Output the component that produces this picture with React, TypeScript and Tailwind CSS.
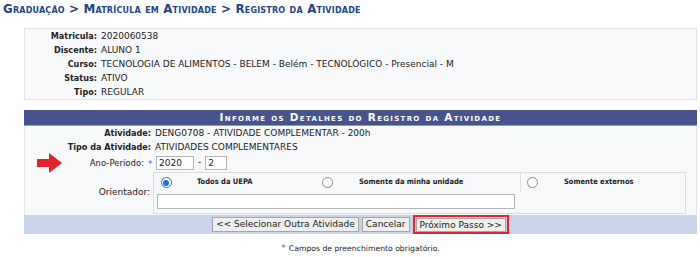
import React from "react";

function Radio({ checked }: { checked?: boolean }) {
  return checked ? (
    <span className="inline-flex h-[11px] w-[11px] items-center justify-center rounded-full border-[1.5px] border-[#1a73e8] bg-white">
      <span className="h-[6px] w-[6px] rounded-full bg-[#1a73e8]" />
    </span>
  ) : (
    <span className="inline-block h-[11px] w-[11px] rounded-full border border-[#8a8a8a] bg-white" />
  );
}

function Star() {
  return <span className="text-[9px] leading-none text-[#3f6cc0]">*</span>;
}

function Row({ label, value, w }: { label: string; value: string; w: string }) {
  return (
    <div className="flex h-[14px] items-center">
      <div className={`${w} shrink-0 pr-[3px] text-right font-['DejaVu_Sans_Condensed','DejaVu_Sans',sans-serif] font-bold font-stretch-condensed`}>
        {label}
      </div>
      <div className="pl-[1px]">{value}</div>
    </div>
  );
}

export default function App() {
  return (
    <div className="relative h-[257px] w-[700px] overflow-hidden bg-white font-['DejaVu_Sans',sans-serif] text-[9px] text-[#222]">
      <h2 className="pl-[3px] pt-[1px] text-[11.8px] font-bold leading-[17px] tracking-[0.2px] text-[#1d4487] [font-variant:small-caps]">
        Graduação &gt; Matrícula em Atividade &gt; Registro da Atividade
      </h2>

      <div className="ml-[24px] mt-[10px] h-[72px] w-[673px] border border-[#e2e4e8] bg-[#f8f9fb] pt-[1px]">
        <Row w="w-[75px]" label="Matricula:" value="2020060538" />
        <Row w="w-[75px]" label="Discente:" value="ALUNO 1" />
        <Row w="w-[75px]" label="Curso:" value="TECNOLOGIA DE ALIMENTOS - BELEM - Belém - TECNOLÓGICO - Presencial - M" />
        <Row w="w-[75px]" label="Status:" value="ATIVO" />
        <Row w="w-[75px]" label="Tipo:" value="REGULAR" />
      </div>

      <div className="ml-[24px] mt-[10px] w-[673px]">
        <div className="flex h-[16px] items-center justify-center border-b border-[#8d99c2] bg-[#46548b] text-[10.5px] font-bold tracking-[1.3px] text-white [font-variant:small-caps]">
          Informe os Detalhes do Registro da Atividade
        </div>
        <div className="border-x border-[#e2e4e8] bg-[#f8f9fb]">
          <div className="pt-[1px]">
            <Row w="w-[129px]" label="Atividade:" value="DENG0708 - ATIVIDADE COMPLEMENTAR - 200h" />
            <Row w="w-[129px]" label="Tipo da Atividade:" value="ATIVIDADES COMPLEMENTARES" />
          </div>
          <div className="relative flex h-[16px] items-center">
            <svg className="absolute left-[12px] top-[-2px]" width="25" height="20" viewBox="0 0 25 20">
              <polygon points="0,6 12,6 12,0 25,10 12,20 12,14 0,14" fill="#e3232b" />
            </svg>
            <div className="w-[120px] shrink-0 pr-[1px] text-right text-[8.5px]">Ano-Período:</div>
            <div className="ml-[3px] flex w-[8px] items-center pt-[3px]">
              <Star />
            </div>
            <div className="h-[14px] w-[38px] border border-[#b5b5b5] bg-white pl-[2px] leading-[12px]">2020</div>
            <div className="px-[4px]">-</div>
            <div className="h-[14px] w-[22px] border border-[#b5b5b5] bg-white pl-[2px] leading-[12px]">2</div>
          </div>
          <div className="flex items-center pb-[1px] pt-[1px]">
            <div className="w-[128px] shrink-0 pr-[3px] text-right">Orientador:</div>
            <div className="h-[42px] w-[533px] border border-[#dcdcdc]">
              <div className="flex h-[19px] items-start font-['DejaVu_Sans_Condensed','DejaVu_Sans',sans-serif] text-[7.5px] font-bold font-stretch-condensed">
                <div className="flex w-[24px] justify-center pt-[4px]">
                  <Radio checked />
                </div>
                <div className="w-[137px] pl-[19px] pt-[3px]">Todos da UEPA</div>
                <div className="flex w-[24px] justify-center pt-[4px]">
                  <Radio />
                </div>
                <div className="h-[19px] w-[182px] border-r border-[#e0e0e0] pl-[20px] pt-[3px]">Somente da minha unidade</div>
                <div className="flex w-[22px] justify-center pt-[4px]">
                  <Radio />
                </div>
                <div className="pl-[21px] pt-[3px]">Somente externos</div>
              </div>
              <div className="ml-[3px] mt-[2px] h-[15px] w-[358px] border border-[#b5b5b5] bg-white" />
            </div>
          </div>
        </div>
        <div className="flex h-[19px] items-center justify-center gap-[3px] bg-[#c8d4ea]">
          <button className="h-[15px] border border-[#a6a6a6] bg-[#efefef] px-[3px] text-[9px] leading-[13px] text-[#222]">
            &lt;&lt; Selecionar Outra Atividade
          </button>
          <button className="h-[15px] border border-[#a6a6a6] bg-[#efefef] px-[3px] text-[9px] leading-[13px] text-[#222]">
            Cancelar
          </button>
          <div className="flex h-[19px] items-center border-2 border-[#e3232b] px-[1px]">
            <button className="h-[14px] border border-[#a6a6a6] bg-[#efefef] px-[3px] text-[9px] leading-[12px] text-[#222]">
              Próximo Passo &gt;&gt;
            </button>
          </div>
        </div>

        <div className="mt-[9px] flex items-center justify-center gap-[3px] text-[7.7px]">
          <Star />
          <span>Campos de preenchimento obrigatório.</span>
        </div>
      </div>
    </div>
  );
}
